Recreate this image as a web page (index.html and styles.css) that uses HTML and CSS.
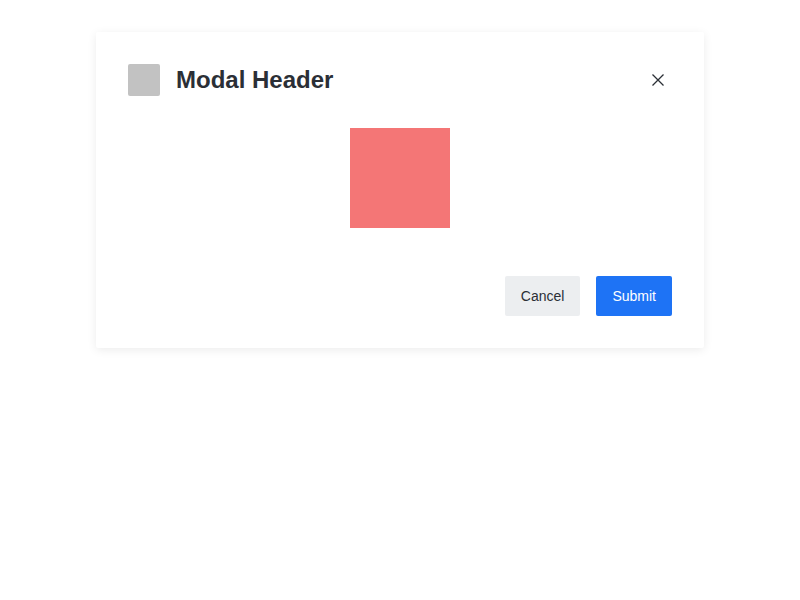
FILE: index.html
```html
<!DOCTYPE html>
<html>
<head>
<meta charset="utf-8">
<link rel="stylesheet" href="styles.css">
</head>
<body>
<div class="page">
<div class="modal">
  <div class="modal-header">
    <div class="modal-icon"></div>
    <h1 class="modal-title">Modal Header</h1>
    <button class="close-btn" aria-label="Close">
      <svg width="14" height="14" viewBox="0 0 14 14"><path d="M1.5 1.5 L12.5 12.5 M12.5 1.5 L1.5 12.5" stroke="#2b2f36" stroke-width="1.3" fill="none"/></svg>
    </button>
  </div>
  <div class="modal-body">
    <div class="content-box"></div>
  </div>
  <div class="modal-footer">
    <button class="btn btn-secondary">Cancel</button>
    <button class="btn btn-primary">Submit</button>
  </div>
</div>
</div>
</body>
</html>
```
FILE: styles.css
```css
html, body { margin: 0; padding: 0; background: #fff; }
body { font-family: "Liberation Sans", Arial, sans-serif; }
.page { padding: 32px 0 40px; }
.modal {
  width: 608px;
  margin: 0 auto;
  box-sizing: border-box;
  padding: 32px;
  background: #fff;
  border-radius: 2px;
  box-shadow: 0 2px 10px rgba(0,0,0,0.08);
}
.modal-header { display: flex; align-items: center; height: 32px; }
.modal-icon { width: 32px; height: 32px; background: #c2c2c2; border-radius: 2px; margin-right: 16px; }
.modal-title { margin: 0; font-size: 24px; font-weight: 700; color: #2b2f36; flex: 1; line-height: 32px; }
.close-btn { border: 0; background: none; padding: 0; width: 28px; height: 28px; display: flex; align-items: center; justify-content: center; cursor: pointer; }
.modal-body { display: flex; justify-content: center; margin-top: 32px; }
.content-box { width: 100px; height: 100px; background: #f47676; }
.modal-footer { display: flex; justify-content: flex-end; gap: 16px; margin-top: 48px; }
.btn { height: 40px; padding: 0 16px; border: 0; border-radius: 2px; font-family: "Liberation Sans", Arial, sans-serif; font-size: 14px; cursor: pointer; }
.btn-secondary { background: #eceef0; color: #2b2f36; }
.btn-primary { background: #1e73f5; color: #fff; }
```
